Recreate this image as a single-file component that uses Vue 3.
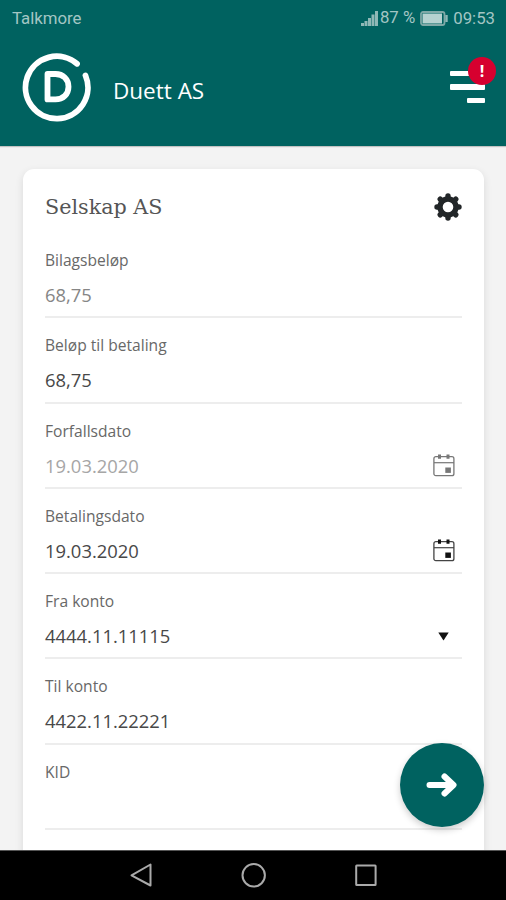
<template>
  <div class="screen">
    <header class="app-header">
      <div class="status-bar">
        <span class="carrier">Talkmore</span>
        <div class="status-right">
          <svg class="signal" width="18" height="16" viewBox="0 0 18 16">
            <path d="M0 13h3v3H0zM3.500 11h3v5h-3zM7 8h3v8H7zM10.500 4.500h3v11.500h-3zM14 1h3v15h-3z" fill="#8fb8b6" />
          </svg>
          <span class="percent">87 %</span>
          <svg class="battery" width="29" height="15" viewBox="0 0 29 15">
            <rect x="1" y="1" width="23.500" height="13" rx="2" fill="none" stroke="#7fa9a7" stroke-width="1.800" />
            <rect x="2.500" y="2.500" width="19.500" height="10" fill="#b6d2d0" />
            <path d="M26.500 4v7" stroke="#8fb8b6" stroke-width="2.400" />
          </svg>
          <span class="clock">09:53</span>
        </div>
      </div>

      <div class="brand-row">
        <svg class="logo" width="70" height="70" viewBox="0 0 70 70" fill="none" stroke="#fff">
          <path d="M55 11.800A31.200 31.200 0 1 0 63.500 23.500" stroke-width="5.800" stroke-linecap="round" />
          <path d="M25.500 22H33.500C41 22 46.500 27.200 46.500 34.700S41 47.400 33.500 47.400H25.500Z" stroke-width="5.800" stroke-linejoin="round" />
        </svg>
        <span class="brand-name">Duett AS</span>
        <button class="menu-btn" @click="toggleMenu">
          <span class="bar"></span>
          <span class="bar"></span>
          <span class="bar short"></span>
          <span class="badge">!</span>
        </button>
      </div>
    </header>

    <main class="content">
      <section class="card">
        <div class="card-header">
          <h2>Selskap AS</h2>
          <svg width="28" height="28" viewBox="-14 -14 28 28">
            <circle r="8" fill="none" stroke="#222628" stroke-width="5.400" />
            <g stroke="#222628" stroke-width="5.400" stroke-linecap="round">
              <path v-for="n in 8" :key="n" d="M0 -9.500V-11" :transform="`rotate(${n * 45})`" />
            </g>
          </svg>
        </div>

        <div
          v-for="field in fields"
          :key="field.label"
          class="field"
          :class="{ disabled: field.disabled, faint: field.faint }"
        >
          <label>{{ field.label }}</label>
          <div class="field-row">
            <span class="value">{{ field.value }}</span>
            <svg v-if="field.icon === 'calendar'" class="calendar" width="22" height="23" viewBox="0 0 22 23">
              <rect x="0.900" y="2.700" width="20" height="19" rx="2" fill="none" stroke="currentColor" stroke-width="1.300" />
              <path d="M1 8.700h20" stroke="currentColor" stroke-width="1.200" />
              <path class="rings" d="M6.500 0.500v4.300M15 0.500v4.300" stroke="currentColor" stroke-width="3" />
              <path class="day" d="M12.300 13.500h5.600v5.400h-5.600z" fill="currentColor" />
            </svg>
            <svg v-if="field.icon === 'arrow'" class="arrow" width="11" height="9" viewBox="0 0 11 9">
              <path d="M0.300 0.500h10.400L5.500 8.500z" fill="#111" />
            </svg>
          </div>
        </div>
      </section>
    </main>

    <button class="next-btn" @click="goNext">
      <svg width="34" height="26" viewBox="0 0 34 26" fill="none" stroke="#fff" stroke-width="6" stroke-linecap="round" stroke-linejoin="round">
        <path d="M4.500 13H27M19.500 4.500L28.500 13L19.500 21.500" />
      </svg>
    </button>

    <nav class="system-nav">
      <svg width="24" height="26" viewBox="0 0 24 26">
        <path d="M21.500 1.500v21L2.500 12.300z" />
      </svg>
      <svg width="26" height="26" viewBox="0 0 26 26">
        <circle cx="12.700" cy="12.300" r="11.200" />
      </svg>
      <svg width="24" height="26" viewBox="0 0 24 26">
        <rect x="2.200" y="2.500" width="19.400" height="19.400" rx="0.500" />
      </svg>
    </nav>
  </div>
</template>

<script setup>
import { ref } from 'vue'

// State
const menuOpen = ref(false)

const fields = ref([
  { label: 'Bilagsbeløp', value: '68,75', disabled: true },
  { label: 'Beløp til betaling', value: '68,75' },
  { label: 'Forfallsdato', value: '19.03.2020', disabled: true, faint: true, icon: 'calendar' },
  { label: 'Betalingsdato', value: '19.03.2020', icon: 'calendar' },
  { label: 'Fra konto', value: '4444.11.11115', icon: 'arrow' },
  { label: 'Til konto', value: '4422.11.22221' },
  { label: 'KID', value: '' }
])

// Methods
function toggleMenu() {
  menuOpen.value = !menuOpen.value
}

function goNext() {
  // TODO: Go to payment confirmation
  console.log('Next', fields.value)
}
</script>

<style>
body {
  margin: 0;
}
</style>

<style scoped>
.screen {
  position: relative;
  display: flex;
  flex-direction: column;
  width: 506px;
  height: 900px;
  overflow: hidden;
  background: #f3f3f3;
  font-family: "Open Sans", "Noto Sans", sans-serif;
}

button {
  border: none;
  padding: 0;
  cursor: pointer;
}

.app-header {
  flex: none;
  height: 146px;
  background: #006260;
  box-shadow: 0 1px 1px rgba(0, 0, 0, 0.2);
}

.status-bar {
  display: flex;
  justify-content: space-between;
  align-items: center;
  height: 36px;
  padding: 0 11px 0 12px;
  font-family: Roboto, sans-serif;
  font-size: 16.8px;
  color: #a3c6c4;
}

.status-right {
  display: flex;
  align-items: center;
}

.percent {
  margin: -2px 5px 0 1px;
}

.battery {
  margin-right: 4px;
}

.brand-row {
  display: flex;
  align-items: center;
  height: 70px;
  padding: 16px 21px 0 22px;
}

.brand-name {
  flex: 1;
  margin: 7px 0 0 21px;
  font-size: 22.5px;
  line-height: 30px;
  color: #fff;
}

.menu-btn {
  position: relative;
  display: flex;
  flex-direction: column;
  align-items: flex-end;
  gap: 8px;
  width: 35px;
  background: none;
}

.bar {
  width: 35px;
  height: 5.5px;
  border-radius: 1px;
  background: #fff;
}

.bar.short {
  width: 18px;
}

.badge {
  position: absolute;
  top: -14px;
  right: -11px;
  width: 28px;
  height: 28px;
  border-radius: 50%;
  background: #d6002f;
  color: #fff;
  font-family: "Open Sans", sans-serif;
  font-size: 16px;
  font-weight: 700;
  line-height: 28px;
  text-align: center;
}

.content {
  flex: 1;
  min-height: 0;
  padding: 23px 22px 0 23px;
  overflow: hidden;
}

.card {
  height: 760px;
  padding: 0 22px;
  border-radius: 11px;
  background: #fff;
  box-shadow: 0 3px 8px rgba(0, 0, 0, 0.11);
}

.card-header {
  display: flex;
  justify-content: space-between;
  align-items: center;
  height: 64px;
  padding-top: 11px;
  box-sizing: border-box;
}

h2 {
  margin: 0;
  font-family: "DejaVu Serif", serif;
  font-size: 20.7px;
  font-weight: 400;
  color: #555;
}

.field {
  height: 85.3px;
  padding-top: 16px;
  box-sizing: border-box;
  border-bottom: 2px solid #ededed;
}

label {
  display: block;
  height: 22px;
  font-size: 15.6px;
  line-height: 22px;
  color: #686868;
}

.field-row {
  display: flex;
  justify-content: space-between;
  align-items: center;
  height: 26px;
  margin-top: 11px;
}

.value {
  margin-top: -1px;
  font-size: 18.4px;
  color: #484848;
}

.disabled .value {
  color: #868686;
}

.faint .value {
  color: #a6a6a6;
}

.calendar {
  margin-right: 7px;
  color: #444;
}

.calendar .rings,
.calendar .day {
  color: #111;
}

.disabled .calendar,
.disabled .calendar .rings,
.disabled .calendar .day {
  color: #777;
}

.arrow {
  margin-right: 13px;
}

.next-btn {
  position: absolute;
  left: 400px;
  top: 743px;
  display: flex;
  align-items: center;
  justify-content: center;
  width: 84px;
  height: 84px;
  border-radius: 50%;
  background: #006260;
  box-shadow: 0 3px 7px rgba(0, 0, 0, 0.2);
}

.system-nav {
  position: relative;
  flex: none;
  display: flex;
  justify-content: space-between;
  align-items: center;
  height: 50px;
  padding: 0 128px 0 129px;
  box-sizing: border-box;
  border-top: 1px solid #555;
  background: #000;
}

.system-nav svg {
  fill: none;
  stroke: #aaa;
  stroke-width: 2;
  stroke-linejoin: round;
}
</style>
